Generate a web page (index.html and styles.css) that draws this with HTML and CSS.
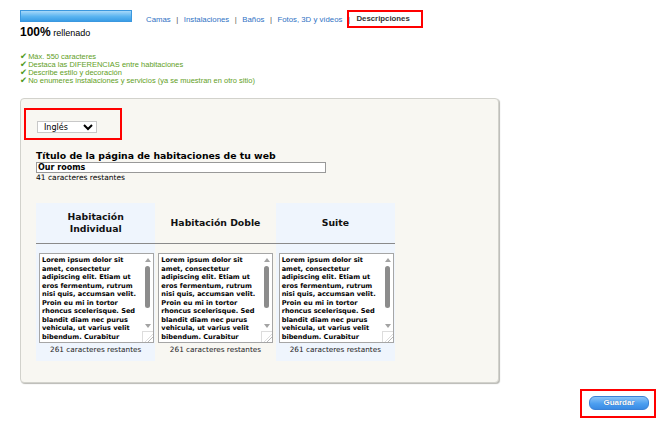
FILE: index.html
```html
<!DOCTYPE html>
<html lang="es">
<head>
<meta charset="utf-8">
<title>Descripciones</title>
<link rel="stylesheet" href="styles.css">
</head>
<body>
<div class="top">
  <div class="progress">
    <div class="bar"></div>
    <div class="pct"><b>100%</b> <span>rellenado</span></div>
  </div>
  <nav class="nav">
    <a href="#">Camas</a><span class="sep">|</span>
    <a href="#">Instalaciones</a><span class="sep">|</span>
    <a href="#">Baños</a><span class="sep">|</span>
    <a href="#">Fotos, 3D y vídeos</a><span class="sep">|</span>
    <span class="current">Descripciones</span>
  </nav>
</div>

<ul class="tips">
  <li><span class="chk">✔</span>Máx. 550 caracteres</li>
  <li><span class="chk">✔</span>Destaca las DIFERENCIAS entre habitaciones</li>
  <li><span class="chk">✔</span>Describe estilo y decoración</li>
  <li><span class="chk">✔</span>No enumeres instalaciones y servicios (ya se muestran en otro sitio)</li>
</ul>

<div class="panel">
  <div class="lang-box">
    <select class="lang"><option>Inglés</option></select>
  </div>
  <div class="title-block">
    <h2 class="title">Título de la página de habitaciones de tu web</h2>
    <div class="title-input">Our rooms</div>
    <div class="remain">41 caracteres restantes</div>
  </div>
  <div class="rooms">
    <div class="room blue">
      <div class="room-head">Habitación Individual</div>
      <div class="room-body">
        <div class="ta">
          <div class="ta-text">Lorem ipsum dolor sit amet, consectetur adipiscing elit. Etiam ut eros fermentum, rutrum nisi quis, accumsan velit. Proin eu mi in tortor rhoncus scelerisque. Sed blandit diam nec purus vehicula, ut varius velit bibendum. Curabitur sollicitudin purus vel</div>
          <div class="sb"><span class="up"></span><span class="thumb"></span><span class="down"></span><span class="grip"></span></div>
        </div>
        <div class="count">261 caracteres restantes</div>
      </div>
    </div>
    <div class="room">
      <div class="room-head">Habitación Doble</div>
      <div class="room-body">
        <div class="ta">
          <div class="ta-text">Lorem ipsum dolor sit amet, consectetur adipiscing elit. Etiam ut eros fermentum, rutrum nisi quis, accumsan velit. Proin eu mi in tortor rhoncus scelerisque. Sed blandit diam nec purus vehicula, ut varius velit bibendum. Curabitur sollicitudin purus vel</div>
          <div class="sb"><span class="up"></span><span class="thumb"></span><span class="down"></span><span class="grip"></span></div>
        </div>
        <div class="count">261 caracteres restantes</div>
      </div>
    </div>
    <div class="room blue">
      <div class="room-head">Suite</div>
      <div class="room-body">
        <div class="ta">
          <div class="ta-text">Lorem ipsum dolor sit amet, consectetur adipiscing elit. Etiam ut eros fermentum, rutrum nisi quis, accumsan velit. Proin eu mi in tortor rhoncus scelerisque. Sed blandit diam nec purus vehicula, ut varius velit bibendum. Curabitur sollicitudin purus vel</div>
          <div class="sb"><span class="up"></span><span class="thumb"></span><span class="down"></span><span class="grip"></span></div>
        </div>
        <div class="count">261 caracteres restantes</div>
      </div>
    </div>
  </div>
</div>

<div class="actions">
  <div class="save-box"><button class="save" type="button">Guardar</button></div>
</div>
</body>
</html>
```

FILE: styles.css
```css
* { box-sizing: border-box; }
html, body { margin: 0; padding: 0; background: #fff; }
body {
  font-family: "Liberation Sans", Arial, sans-serif;
  color: #000;
  width: 670px;
  height: 430px;
  overflow: hidden;
}

.top {
  display: flex;
  align-items: flex-start;
  padding: 10px 0 0 20px;
}
.progress { width: 112px; }
.bar {
  height: 12px;
  border: 1px solid #3b98df;
  background: linear-gradient(#a6d8fa, #5ab4f0 55%, #3a9de6);
}
.pct { margin-top: 3px; font-size: 9px; line-height: 14px; white-space: nowrap; }
.pct b { font-size: 12px; }

.nav {
  display: flex;
  align-items: center;
  margin-left: 14px;
  font-size: 7.8px;
  height: 18px;
}
.nav a { color: #2f72c4; text-decoration: none; }
.nav .sep { color: #555; margin: 0 5.5px; }
.nav .current {
  color: #333;
  font-weight: bold;
  border: 2px solid #f00;
  width: 76px;
  height: 18px;
  line-height: 14px;
  padding: 0 0 0 7px;
  margin-left: -8px;
}

.tips {
  list-style: none;
  margin: 12px 0 0 20px;
  padding: 0;
  font-size: 7.5px;
  line-height: 8px;
  color: #62a01e;
}
.tips li { height: 8px; line-height: 8px; white-space: nowrap; }
.tips .chk { color: #4f9a22; font-size: 8.5px; line-height: 8px; margin-right: 1px; font-family: "DejaVu Sans", sans-serif; }

.panel {
  margin: 14px 0 0 20px;
  width: 479px;
  height: 285px;
  background: #f8f7f2;
  border: 1px solid #d2d2cc;
  border-radius: 4px;
  box-shadow: 1px 1px 1px #b9b9b4;
  padding: 9px 0 0 3px;
  font-family: "DejaVu Sans", Verdana, sans-serif;
}
.lang-box {
  width: 98px;
  height: 32px;
  border: 2px solid #f00;
  padding: 11px 0 0 11px;
}
.lang {
  display: block;
  width: 60px;
  height: 12px;
  font-family: "DejaVu Sans", Verdana, sans-serif;
  font-size: 8px;
  border: 1px solid #c8c8c8;
  background: #fff;
  padding: 0 0 0 2px;
}

.title-block { margin: 10px 0 0 12px; }
.title { margin: 0; font-size: 9.3px; font-weight: bold; line-height: 12px; }
.title-input {
  width: 290px;
  height: 11px;
  border: 1px solid #999;
  background: #fff;
  font-size: 8px;
  font-weight: bold;
  line-height: 9px;
  padding-left: 1px;
}
.remain { font-size: 7.5px; line-height: 10px; }

.rooms {
  display: flex;
  margin: 20px 0 0 12px;
  width: 359px;
}
.room { width: 120px; }
.room:nth-child(2) { width: 121px; }
.room.blue { background: #eff5fd; }
.room-head {
  height: 41px;
  display: flex;
  align-items: center;
  justify-content: center;
  text-align: center;
  font-size: 9.3px;
  font-weight: bold;
  line-height: 12px;
  color: #111;
  border-bottom: 1px solid #8a8a8a;
  padding: 0 10px;
}
.room-body { padding: 9px 0 6px 3px; height: 117px; }
.ta {
  position: relative;
  width: 115px;
  height: 90px;
  border: 1px solid #a6a6a6;
  background: #fff;
  overflow: hidden;
  padding: 2px 12px 0 2px;
}
.ta-text {
  font-size: 6.6px;
  font-weight: bold;
  line-height: 8.5px;
  color: #000;
}
.sb {
  position: absolute;
  top: 0;
  right: 0;
  width: 11px;
  height: 88px;
  background: #fff;
}
.sb .up, .sb .down {
  position: absolute;
  left: 3px;
  width: 0;
  height: 0;
  border-left: 3px solid transparent;
  border-right: 3px solid transparent;
}
.sb .up { top: 4px; border-bottom: 4px solid #a3a3a3; }
.sb .down { top: 70px; border-top: 4px solid #a3a3a3; }
.sb .thumb {
  position: absolute;
  left: 3px;
  top: 12px;
  width: 5px;
  height: 42px;
  border-radius: 3px;
  background: #8c8c8c;
}
.sb .grip {
  position: absolute;
  right: 0;
  bottom: 0;
  width: 11px;
  height: 11px;
  border-top: 1px solid #ddd;
  border-left: 1px solid #ddd;
  background: linear-gradient(135deg, transparent 55%, #aaa 57%, transparent 62%, transparent 72%, #aaa 74%, transparent 79%);
}
.count {
  text-align: center;
  font-size: 7.3px;
  line-height: 10px;
  margin-top: 2px;
  padding-right: 3px;
  color: #222;
}

.actions { display: flex; justify-content: flex-end; padding: 6px 14px 0 0; }
.save-box {
  width: 76px;
  height: 29px;
  border: 2px solid #f00;
  padding: 5px 0 0 7px;
}
.save {
  display: block;
  width: 60px;
  height: 14px;
  border: 1px solid #3b82d6;
  border-radius: 6px;
  background: linear-gradient(#8cc4f7, #4d9ff0 55%, #3a8be4);
  color: #fff;
  font-family: "Liberation Sans", Arial, sans-serif;
  font-size: 8px;
  font-weight: bold;
  line-height: 12px;
  padding: 0;
  text-shadow: 0 0 1px #2a5f9e;
}
```
